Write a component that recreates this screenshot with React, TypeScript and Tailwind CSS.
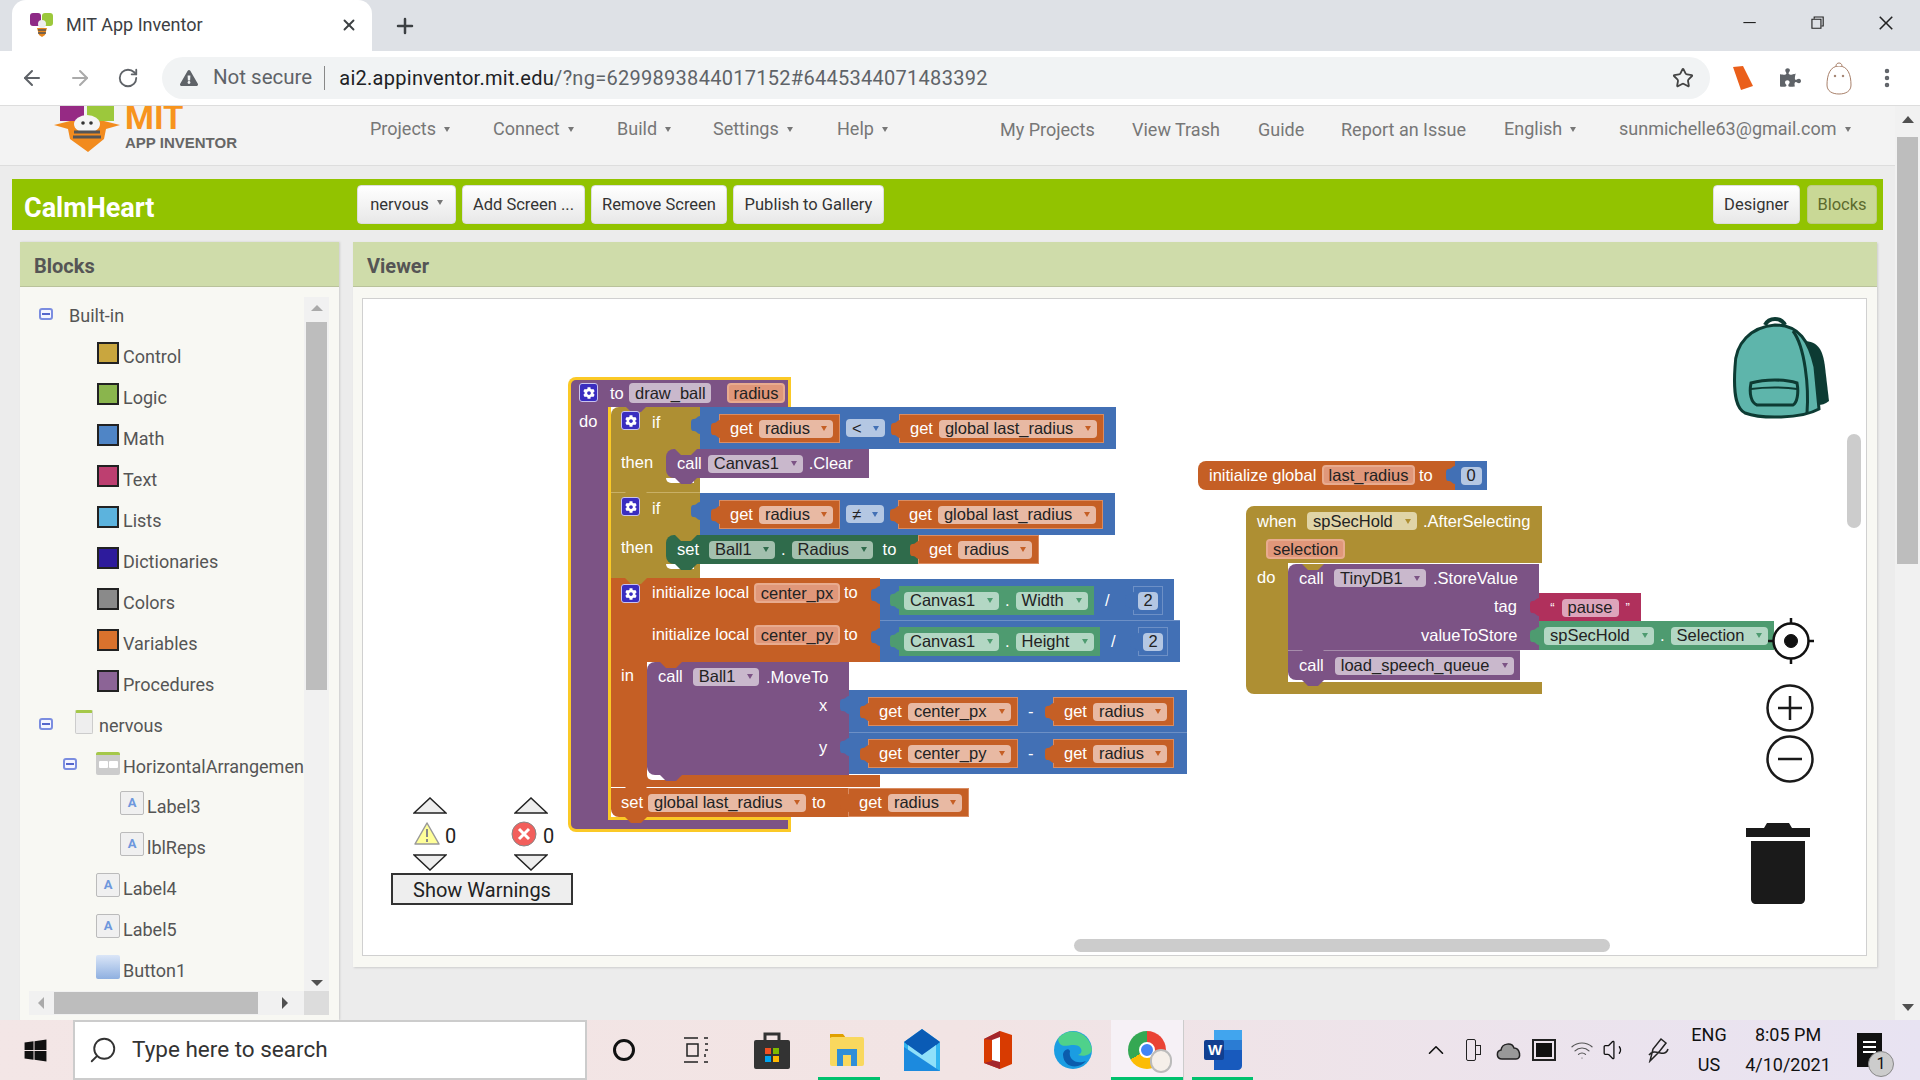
import React from "react";
import clsx from "clsx";
import { ArrowLeft, ArrowRight, ChevronUp, EllipsisVertical, Plus, RotateCw, Search, Star, Volume1, Wifi, X } from "lucide-react";
import { FaCog, FaExclamationTriangle, FaPuzzlePiece, FaWindows } from "react-icons/fa";
import { VscChromeClose, VscChromeMinimize, VscChromeRestore } from "react-icons/vsc";

const tones = {
  orange: { chip: "bg-[#e8b9a3]", caret: "border-t-[#c55f25]" },
  purple: { chip: "bg-[#c9b8cc]", caret: "border-t-[#7c5385]" },
  dark: { chip: "bg-[#a3c0ae]", caret: "border-t-[#2f6b4b]" },
  green: { chip: "bg-[#b3d7c4]", caret: "border-t-[#4e9b70]" },
  mustard: { chip: "bg-[#e0d4a7]", caret: "border-t-[#ae8f33]" },
  blue: { chip: "bg-[#b4c7e3]", caret: "border-t-[#4270b5]" },
};

type Tone = keyof typeof tones;

function Chip({ tone, className, children, noCaret }: { tone: Tone; className?: string; children: React.ReactNode; noCaret?: boolean }) {
  return (
    <span className={clsx("flex h-[18px] items-center justify-between gap-1 rounded-[4px] px-[6px] whitespace-nowrap text-[#222]", tones[tone].chip, className)}>
      {children}
      {!noCaret && <span className={clsx("h-0 w-0 border-x-[3px] border-t-[5px] border-x-transparent", tones[tone].caret)} />}
    </span>
  );
}

function Arg({ className, children }: { className: string; children: React.ReactNode }) {
  return (
    <span className={clsx("absolute flex h-[20px] items-center justify-center rounded-[4px] border-2 border-[#e8ab8f] bg-[#e0977a] text-[#222]", className)}>
      {children}
    </span>
  );
}

function T({ className, children }: { className: string; children: React.ReactNode }) {
  return <span className={clsx("absolute h-5 leading-5 whitespace-nowrap text-white", className)}>{children}</span>;
}

function R({ className, children }: { className: string; children?: React.ReactNode }) {
  return <div className={clsx("absolute", className)}>{children}</div>;
}

function Tab({ className }: { className: string }) {
  return (
    <svg className={clsx("absolute", className)} width="9" height="18" viewBox="0 0 9 18">
      <path d="M9 0C6 0 6 3 3 3C0 3 0 5 0 9C0 13 0 15 3 15C6 15 6 18 9 18Z" fill="currentColor" />
    </svg>
  );
}

function Notch({ className }: { className: string }) {
  return (
    <svg className={clsx("absolute", className)} width="22" height="6" viewBox="0 0 22 6">
      <path d="M0 0L6 6H16L22 0Z" fill="currentColor" />
    </svg>
  );
}

function Gear({ className }: { className: string }) {
  return (
    <span className={clsx("absolute flex h-[19px] w-[19px] items-center justify-center rounded-[3px] border border-[#c9c3ee] bg-[#3a2dc0] text-white", className)}>
      <FaCog size={12} />
    </span>
  );
}

function Get({ className, name }: { className: string; name: string }) {
  return (
    <div className={clsx("absolute flex h-[29px] items-center gap-[6px] border border-[#d98c62] bg-[#c55f25] pl-[10px] pr-[6px] text-white", className)}>
      <Tab className="-left-[9px] top-[5px] text-[#c55f25]" />
      get
      <Chip tone="orange" className="flex-1">{name}</Chip>
    </div>
  );
}

function Prop({ className, a, b, aw, tone }: { className: string; a: string; b: string; aw: string; tone: "dark" | "green" }) {
  const bg = tone === "dark" ? "bg-[#2f6b4b]" : "bg-[#4e9b70]";
  return (
    <div className={clsx("absolute flex h-[29px] items-center gap-[6px] pl-[5px] pr-[6px]", bg, className)}>
      <Tab className={clsx("-left-[9px] top-[5px]", tone === "dark" ? "text-[#2f6b4b]" : "text-[#4e9b70]")} />
      <Chip tone={tone} className={aw}>{a}</Chip>
      <span className="text-white">.</span>
      <Chip tone={tone} className="flex-1">{b}</Chip>
    </div>
  );
}

function Workspace() {
  return (
    <div className="absolute left-[-363px] top-[-299px] h-[1080px] w-[1920px] font-['Liberation_Sans',sans-serif] text-[16.5px]">
      {/* to draw_ball */}
      <R className="left-[568px] top-[377px] h-[30px] w-[223px] rounded-tl-[8px] border-[3px] border-b-0 border-[#fbc926] bg-[#7c5385]" />
      <R className="left-[568px] top-[407px] h-[413px] w-[43px] border-x-[3px] border-[#fbc926] bg-[#7c5385]" />
      <R className="left-[568px] top-[817px] h-[15px] w-[223px] rounded-bl-[8px] border-[3px] border-t-0 border-[#fbc926] bg-[#7c5385]" />
      <R className="left-[608px] top-[817px] h-[3px] w-[183px] bg-[#fbc926]" />
      <Gear className="left-[579px] top-[383px]" />
      <T className="left-[610px] top-[383px]">to</T>
      <R className="left-[629px] top-[383px]"><Chip tone="purple" noCaret className="h-[20px] w-[82px]">draw_ball</Chip></R>
      <Arg className="left-[727px] top-[383px] w-[58px]">radius</Arg>
      <T className="left-[579px] top-[411px]">do</T>

      {/* first if */}
      <R className="left-[611px] top-[407px] h-[85px] w-[89px] rounded-tl-[8px] bg-[#ae8f33]" />
      <Notch className="left-[625px] top-[406px] text-[#7c5385]" />
      <Gear className="left-[621px] top-[411px]" />
      <T className="left-[652px] top-[412px]">if</T>
      <Tab className="left-[691px] top-[416px] text-[#4270b5]" />
      <R className="left-[700px] top-[407px] h-[42px] w-[416px] bg-[#4270b5]" />
      <Get className="left-[719px] top-[414px] w-[121px]" name="radius" />
      <R className="left-[846px] top-[419px]"><Chip tone="blue" className="h-[18px] w-[39px]">&lt;</Chip></R>
      <Get className="left-[899px] top-[414px] w-[205px]" name="global last_radius" />
      <T className="left-[621px] top-[452px]">then</T>
      <R className="left-[666px] top-[478px] h-[5px] w-[28px] rounded-bl-[8px] bg-white" />
      <R className="left-[666px] top-[449px] flex h-[29px] w-[203px] items-center gap-[6px] rounded-l-[8px] bg-[#7c5385] pl-[11px] text-white">
        call
        <Chip tone="purple" className="w-[95px]">Canvas1</Chip>
        .Clear
      </R>
      <Notch className="left-[675px] top-[478px] text-[#7c5385]" />
      <Notch className="left-[675px] top-[449px] text-[#ae8f33]" />

      {/* second if */}
      <R className="left-[611px] top-[492px] h-[86px] w-[89px] border-t border-[#c9b066] bg-[#ae8f33]" />
      <Notch className="left-[625px] top-[492px] text-[#ae8f33]" />
      <Gear className="left-[621px] top-[497px]" />
      <T className="left-[652px] top-[498px]">if</T>
      <Tab className="left-[691px] top-[502px] text-[#4270b5]" />
      <R className="left-[700px] top-[493px] h-[42px] w-[415px] bg-[#4270b5]" />
      <Get className="left-[719px] top-[500px] w-[121px]" name="radius" />
      <R className="left-[846px] top-[505px]"><Chip tone="blue" className="h-[18px] w-[38px]">≠</Chip></R>
      <Get className="left-[898px] top-[500px] w-[205px]" name="global last_radius" />
      <T className="left-[621px] top-[537px]">then</T>
      <R className="left-[666px] top-[564px] h-[5px] w-[28px] rounded-bl-[8px] bg-white" />
      <R className="left-[666px] top-[535px] flex h-[29px] w-[253px] items-center rounded-l-[8px] bg-[#2f6b4b] pl-[11px] text-white">
        set
        <Chip tone="dark" className="ml-[10px] w-[66px]">Ball1</Chip>
        <span className="mx-[6px]">.</span>
        <Chip tone="dark" className="w-[81px]">Radius</Chip>
        <span className="ml-[10px]">to</span>
      </R>
      <Notch className="left-[675px] top-[564px] text-[#2f6b4b]" />
      <Notch className="left-[675px] top-[535px] text-[#ae8f33]" />
      <Get className="left-[918px] top-[535px] w-[121px]" name="radius" />

      {/* initialize local */}
      <R className="left-[611px] top-[578px] h-[84px] w-[269px] bg-[#c55f25]" />
      <R className="left-[611px] top-[662px] h-[113px] w-[36px] bg-[#c55f25]" />
      <R className="left-[611px] top-[775px] h-[12px] w-[269px] bg-[#c55f25]" />
      <Notch className="left-[625px] top-[578px] text-[#ae8f33]" />
      <Gear className="left-[621px] top-[584px]" />
      <T className="left-[652px] top-[582px]">initialize local</T>
      <Arg className="left-[754px] top-[583px] w-[86px]">center_px</Arg>
      <T className="left-[844px] top-[582px]">to</T>
      <T className="left-[652px] top-[624px]">initialize local</T>
      <Arg className="left-[754px] top-[625px] w-[86px]">center_py</Arg>
      <T className="left-[844px] top-[624px]">to</T>

      <Tab className="left-[871px] top-[586px] text-[#4270b5]" />
      <R className="left-[880px] top-[579px] h-[41px] w-[294px] bg-[#4270b5]" />
      <Prop className="left-[899px] top-[586px] w-[195px]" a="Canvas1" b="Width" aw="w-[95px]" tone="green" />
      <T className="left-[1105px] top-[590px]">/</T>
      <R className="left-[1133px] top-[586px] flex h-[29px] w-[30px] items-center justify-center border border-[#6d90c6]">
        <Tab className="-left-[9px] top-[5px] text-[#4270b5]" />
        <Chip tone="blue" noCaret className="w-[20px] justify-center !px-0">2</Chip>
      </R>
      <Tab className="left-[871px] top-[628px] text-[#4270b5]" />
      <R className="left-[880px] top-[620px] h-[42px] w-[300px] border-t border-[#6d90c6] bg-[#4270b5]" />
      <Prop className="left-[899px] top-[627px] w-[201px]" a="Canvas1" b="Height" aw="w-[95px]" tone="green" />
      <T className="left-[1111px] top-[631px]">/</T>
      <R className="left-[1138px] top-[627px] flex h-[29px] w-[30px] items-center justify-center border border-[#6d90c6]">
        <Tab className="-left-[9px] top-[5px] text-[#4270b5]" />
        <Chip tone="blue" noCaret className="w-[20px] justify-center !px-0">2</Chip>
      </R>

      {/* in: MoveTo */}
      <T className="left-[621px] top-[665px]">in</T>
      <R className="left-[647px] top-[775px] h-[5px] w-[30px] rounded-bl-[8px] bg-white" />
      <R className="left-[647px] top-[662px] h-[113px] w-[202px] rounded-l-[8px] bg-[#7c5385]" />
      <Notch className="left-[660px] top-[662px] text-[#c55f25]" />
      <Notch className="left-[660px] top-[775px] text-[#7c5385]" />
      <R className="left-[658px] top-[667px] flex h-[19px] items-center gap-[10px] text-white">
        call
        <Chip tone="purple" className="w-[66px]">Ball1</Chip>
      </R>
      <T className="left-[766px] top-[667px]">.MoveTo</T>
      <T className="left-[819px] top-[695px]">x</T>
      <T className="left-[819px] top-[737px]">y</T>
      <Tab className="left-[840px] top-[696px] text-[#4270b5]" />
      <R className="left-[849px] top-[690px] h-[42px] w-[338px] bg-[#4270b5]" />
      <Get className="left-[868px] top-[697px] w-[150px]" name="center_px" />
      <T className="left-[1028px] top-[701px]">-</T>
      <Get className="left-[1053px] top-[697px] w-[121px]" name="radius" />
      <Tab className="left-[840px] top-[738px] text-[#4270b5]" />
      <R className="left-[849px] top-[732px] h-[42px] w-[338px] border-t border-[#6d90c6] bg-[#4270b5]" />
      <Get className="left-[868px] top-[739px] w-[150px]" name="center_py" />
      <T className="left-[1028px] top-[743px]">-</T>
      <Get className="left-[1053px] top-[739px] w-[121px]" name="radius" />

      {/* set global */}
      <R className="left-[611px] top-[788px] flex h-[29px] w-[237px] items-center rounded-bl-[8px] bg-[#c55f25] pl-[10px] text-white">
        set
        <Chip tone="orange" className="ml-[5px] w-[158px]">global last_radius</Chip>
        <span className="ml-[6px]">to</span>
      </R>
      <Notch className="left-[625px] top-[787px] text-[#c55f25]" />
      <Notch className="left-[625px] top-[817px] text-[#c55f25]" />
      <Get className="left-[848px] top-[788px] w-[121px]" name="radius" />

      {/* initialize global */}
      <R className="left-[1198px] top-[461px] h-[29px] w-[257px] rounded-l-[8px] bg-[#c55f25]" />
      <T className="left-[1209px] top-[465px]">initialize global</T>
      <Arg className="left-[1322px] top-[465px] w-[93px]">last_radius</Arg>
      <T className="left-[1419px] top-[465px]">to</T>
      <Tab className="left-[1446px] top-[466px] text-[#4270b5]" />
      <R className="left-[1455px] top-[461px] flex h-[29px] w-[32px] items-center justify-center bg-[#4270b5]">
        <Chip tone="blue" noCaret className="w-[21px] justify-center !px-0">0</Chip>
      </R>

      {/* when spSecHold */}
      <R className="left-[1246px] top-[506px] h-[57px] w-[296px] rounded-tl-[8px] bg-[#ae8f33]" />
      <R className="left-[1246px] top-[563px] h-[119px] w-[42px] bg-[#ae8f33]" />
      <R className="left-[1246px] top-[682px] h-[12px] w-[296px] rounded-bl-[8px] bg-[#ae8f33]" />
      <T className="left-[1257px] top-[511px]">when</T>
      <R className="left-[1307px] top-[512px]"><Chip tone="mustard" className="w-[110px]">spSecHold</Chip></R>
      <T className="left-[1423px] top-[511px]">.AfterSelecting</T>
      <Arg className="left-[1266px] top-[539px] w-[79px]">selection</Arg>
      <T className="left-[1257px] top-[567px]">do</T>
      <R className="left-[1288px] top-[564px] h-[86px] w-[251px] rounded-tl-[8px] bg-[#7c5385]" />
      <Notch className="left-[1302px] top-[564px] text-[#ae8f33]" />
      <T className="left-[1299px] top-[568px]">call</T>
      <R className="left-[1334px] top-[569px]"><Chip tone="purple" className="w-[92px]">TinyDB1</Chip></R>
      <T className="left-[1433px] top-[568px]">.StoreValue</T>
      <T className="left-[1494px] top-[596px]">tag</T>
      <T className="left-[1421px] top-[625px]">valueToStore</T>
      <Tab className="left-[1530px] top-[598px] text-[#b0305c]" />
      <R className="left-[1539px] top-[593px] flex h-[29px] w-[102px] items-center justify-center gap-[7px] bg-[#b0305c] text-white">
        <span className="text-[13px]">“</span>
        <span className="flex h-[18px] w-[57px] items-center justify-center rounded-[4px] bg-[#dda5bb] text-[#222]">pause</span>
        <span className="text-[13px]">”</span>
      </R>
      <Tab className="left-[1530px] top-[627px] text-[#4e9b70]" />
      <R className="left-[1539px] top-[621px] flex h-[29px] w-[235px] items-center gap-[6px] bg-[#4e9b70] pl-[5px] pr-[6px] text-white">
        <Chip tone="green" className="w-[110px]">spSecHold</Chip>
        .
        <Chip tone="green" className="flex-1">Selection</Chip>
      </R>
      <R className="left-[1288px] top-[650px] flex h-[30px] w-[232px] items-center gap-[11px] rounded-bl-[8px] border-t border-[#a68cab] bg-[#7c5385] pl-[11px] text-white">
        call
        <Chip tone="purple" className="w-[179px]">load_speech_queue</Chip>
      </R>
      <Notch className="left-[1302px] top-[650px] text-[#7c5385]" />
      <Notch className="left-[1302px] top-[680px] text-[#7c5385]" />

      {/* backpack */}
      <svg className="absolute left-[1731px] top-[317px]" width="100" height="102" viewBox="0 0 100 102">
        <path d="M72 24C88 24 92 34 94 50L98 84C90 90 84 88 80 86Z" fill="#0d3b33" />
        <path d="M76 32C82 40 84 60 84 80" fill="none" stroke="#fff" strokeWidth="4" />
        <path d="M34 8C38 0 50 0 54 8" fill="none" stroke="#0d3b33" strokeWidth="4" />
        <path d="M4 50C4 26 20 10 44 8C68 8 78 24 84 50L88 92C70 102 30 102 14 96C6 92 2 80 4 50Z" fill="#5eb5ab" stroke="#0d3b33" strokeWidth="3" />
        <path d="M62 14C74 30 78 70 76 96" fill="none" stroke="#0d3b33" strokeWidth="3" />
        <path d="M20 66C34 62 54 62 66 66C68 76 66 86 62 88H26C20 86 18 76 20 66Z" fill="#5eb5ab" stroke="#0d3b33" strokeWidth="3" />
        <path d="M20 72C34 70 54 70 66 72" fill="none" stroke="#0d3b33" strokeWidth="2" />
      </svg>

      {/* workspace controls */}
      <svg className="absolute left-[1768px] top-[618px]" width="46" height="46" viewBox="0 0 46 46" fill="none" stroke="#111">
        <circle cx="23" cy="23" r="17.5" fill="#fff" strokeWidth="2.5" />
        <path d="M23 0V6M23 40V46M0 23H6M40 23H46" strokeWidth="2.5" />
        <circle cx="23" cy="23" r="6.5" fill="#111" />
      </svg>
      <svg className="absolute left-[1765px] top-[683px]" width="50" height="50" viewBox="0 0 50 50" fill="none" stroke="#1a1a1a" strokeWidth="2.5">
        <circle cx="25" cy="25" r="22.5" fill="#fff" />
        <path d="M13 25H37M25 13V37" />
      </svg>
      <svg className="absolute left-[1765px] top-[734px]" width="50" height="50" viewBox="0 0 50 50" fill="none" stroke="#1a1a1a" strokeWidth="2.5">
        <circle cx="25" cy="25" r="22.5" fill="#fff" />
        <path d="M13 25H37" />
      </svg>
      <svg className="absolute left-[1746px] top-[823px]" width="64" height="82" viewBox="0 0 64 82" fill="#1a1a1a">
        <path d="M0 5H18L21 0H43L46 5H64V14H0Z" />
        <path d="M5 18H59V76C59 79 57 81 54 81H10C7 81 5 79 5 76Z" />
      </svg>

      {/* warnings */}
      <svg className="absolute left-[413px] top-[797px]" width="34" height="17" viewBox="0 0 34 17"><path d="M1 16L17 1L33 16Z" fill="#eee" stroke="#222" strokeWidth="1.5" /></svg>
      <svg className="absolute left-[514px] top-[797px]" width="34" height="17" viewBox="0 0 34 17"><path d="M1 16L17 1L33 16Z" fill="#eee" stroke="#222" strokeWidth="1.5" /></svg>
      <svg className="absolute left-[414px] top-[821px]" width="26" height="25" viewBox="0 0 26 25">
        <path d="M13 2L25 23H1Z" fill="#ffff99" stroke="#999" strokeWidth="1.5" strokeLinejoin="round" />
        <path d="M13 8V16M13 18V21" stroke="#888" strokeWidth="2" />
      </svg>
      <span className="absolute left-[445px] top-[821px] font-['Roboto',sans-serif] text-[20px] text-[#222]">0</span>
      <svg className="absolute left-[511px] top-[821px]" width="26" height="26" viewBox="0 0 26 26">
        <circle cx="13" cy="13" r="12" fill="#f25f5c" stroke="#888" />
        <path d="M8 8L18 18M18 8L8 18" stroke="#fff" strokeWidth="3" />
      </svg>
      <span className="absolute left-[543px] top-[821px] font-['Roboto',sans-serif] text-[20px] text-[#222]">0</span>
      <svg className="absolute left-[413px] top-[854px]" width="34" height="17" viewBox="0 0 34 17"><path d="M1 1L17 16L33 1Z" fill="#eee" stroke="#222" strokeWidth="1.5" /></svg>
      <svg className="absolute left-[514px] top-[854px]" width="34" height="17" viewBox="0 0 34 17"><path d="M1 1L17 16L33 1Z" fill="#eee" stroke="#222" strokeWidth="1.5" /></svg>
      <button className="absolute left-[391px] top-[873px] h-[32px] w-[182px] border-2 border-[#333] bg-[#eee] font-['Roboto',sans-serif] text-[20px] text-[#222]">Show Warnings</button>
    </div>
  );
}

const palette = [
  ["Control", "bg-[#c9a63e]"],
  ["Logic", "bg-[#8ab54d]"],
  ["Math", "bg-[#4f85c6]"],
  ["Text", "bg-[#bd3f70]"],
  ["Lists", "bg-[#5cb3dd]"],
  ["Dictionaries", "bg-[#2d1b9c]"],
  ["Colors", "bg-[#8a8a8a]"],
  ["Variables", "bg-[#d9722d]"],
  ["Procedures", "bg-[#8c6496]"],
];

function Minus({ className }: { className?: string }) {
  return (
    <span className={clsx("flex h-[12px] w-[14px] shrink-0 -translate-y-[2px] items-center justify-center rounded-[3px] border-2 border-[#7b8de0] bg-[#f5f5ff]", className)}>
      <span className="h-[2px] w-[8px] bg-[#5566cc]" />
    </span>
  );
}

function LabelIcon() {
  return (
    <span className="flex h-[24px] w-[24px] shrink-0 -translate-y-[4px] items-center justify-center rounded-[2px] border border-[#bbb] bg-[#f0f0f0] text-[13px] font-bold leading-none text-[#6d97dd]">A</span>
  );
}

function Tree() {
  return (
    <div className="h-[696px] w-[284px] shrink-0 overflow-hidden whitespace-nowrap pt-[8px] text-[18px] text-[#555]">
      <div className="flex h-[41px] items-center pl-[19px]">
        <Minus />
        <span className="ml-[16px]">Built-in</span>
      </div>
      {palette.map(([name, color]) => (
        <div key={name} className="flex h-[41px] items-center pl-[77px]">
          <span className={clsx("h-[22px] w-[22px] shrink-0 -translate-y-[4px] border-2 border-[#222]", color)} />
          <span className="ml-[4px]">{name}</span>
        </div>
      ))}
      <div className="flex h-[41px] items-center pl-[19px]">
        <Minus />
        <span className="ml-[22px] h-[24px] w-[18px] shrink-0 -translate-y-[4px] rounded-[2px] border border-[#ccc] border-t-[3px] border-t-[#a5c84a] bg-[#eee]" />
        <span className="ml-[6px]">nervous</span>
      </div>
      <div className="flex h-[40px] items-center pl-[43px]">
        <Minus />
        <span className="ml-[19px] flex h-[23px] w-[24px] shrink-0 -translate-y-[3px] items-center justify-center gap-[1px] rounded-[2px] border-t-[3px] border-t-[#a5c84a] bg-[#ccc]">
          <span className="h-[7px] w-[9px] rounded-[1px] bg-white" />
          <span className="h-[7px] w-[9px] rounded-[1px] bg-white" />
        </span>
        <span className="ml-[3px]">HorizontalArrangemen</span>
      </div>
      <div className="flex h-[41px] items-center pl-[100px]"><LabelIcon /><span className="ml-[3px]">Label3</span></div>
      <div className="flex h-[41px] items-center pl-[100px]"><LabelIcon /><span className="ml-[3px]">lblReps</span></div>
      <div className="flex h-[41px] items-center pl-[76px]"><LabelIcon /><span className="ml-[3px]">Label4</span></div>
      <div className="flex h-[41px] items-center pl-[76px]"><LabelIcon /><span className="ml-[3px]">Label5</span></div>
      <div className="flex h-[41px] items-center pl-[76px]">
        <span className="h-[24px] w-[24px] shrink-0 -translate-y-[4px] rounded-[2px] bg-gradient-to-b from-[#dbe6f7] to-[#8fb0e0]" />
        <span className="ml-[3px]">Button1</span>
      </div>
    </div>
  );
}

function Caret() {
  return <span className="ml-[8px] inline-block h-0 w-0 -translate-y-[3px] border-x-[3px] border-t-[5px] border-x-transparent border-t-[#777]" />;
}

function Btn({ className, children }: { className?: string; children: React.ReactNode }) {
  return (
    <button className={clsx("flex h-[39px] items-center justify-center rounded-[4px] border pt-[1px] text-[16.5px]", className ?? "", className?.includes("bg-[#c9d896]") ? "" : "border-[#ddd] bg-gradient-to-b from-white to-[#e8e8e8] text-[#333]")}>
      {children}
    </button>
  );
}

function Taskbar() {
  return (
    <div className="relative flex h-[60px] shrink-0 items-center bg-gradient-to-r from-[#f3e6e6] via-[#f2e4e4] to-[#e8e3f2] text-[#111]">
      <div className="flex w-[73px] justify-center pr-[2px]"><FaWindows size={25} /></div>
      <div className="flex h-[60px] w-[514px] items-center border-2 border-[#ccc] bg-white pl-[13px] text-[22.5px] text-[#333]">
        <Search size={30} strokeWidth={1.5} className="-scale-x-100" />
        <span className="ml-[14px]">Type here to search</span>
      </div>
      <div className="flex h-[60px] w-[73px] items-center justify-center">
        <span className="h-[22px] w-[22px] rounded-full border-[3px] border-[#111]" />
      </div>
      <div className="flex h-[60px] w-[71px] items-center justify-center">
        <svg width="24" height="26" viewBox="0 0 24 26" fill="none" stroke="#222" strokeWidth="1.5">
          <path d="M0 1H14M0 25H14M20 1H24M20 25H24M3 7H14V19H3ZM21 7H24M21 13H24M21 17V20" />
        </svg>
      </div>
      <div className="flex h-[60px] w-[81px] items-center justify-center">
        <svg width="36" height="38" viewBox="0 0 36 38">
          <path d="M11 10V3H25V10" fill="none" stroke="#333" strokeWidth="3" />
          <rect y="9" width="36" height="29" rx="2" fill="#333" />
          <rect x="11" y="17" width="6" height="6" fill="#f25022" />
          <rect x="19" y="17" width="6" height="6" fill="#7fba00" />
          <rect x="11" y="25" width="6" height="6" fill="#00a4ef" />
          <rect x="19" y="25" width="6" height="6" fill="#ffb900" />
        </svg>
      </div>
      <div className="relative flex h-[60px] w-[70px] items-center justify-center">
        <svg width="34" height="32" viewBox="0 0 34 32">
          <path d="M0 0H13L16 4H0Z" fill="#e0a000" />
          <rect y="3" width="34" height="29" rx="2" fill="#f9d85e" />
          <path d="M7 32V15H27V32H21V21H13V32Z" fill="#2f8fd8" />
        </svg>
        <span className="absolute bottom-0 left-[6px] h-[3px] w-[62px] bg-[#00c16e]" />
      </div>
      <div className="flex h-[60px] w-[80px] items-center justify-center">
        <svg width="36" height="42" viewBox="0 0 36 42">
          <path d="M0 13L18 0L36 13V42H0Z" fill="#32b5f0" />
          <path d="M0 13L18 0L36 13L18 28Z" fill="#0a5bb5" />
          <path d="M4 16L18 26L32 16V42H4Z" fill="#8fe0fa" />
          <path d="M0 18L36 42H0Z" fill="#1c8ade" />
        </svg>
      </div>
      <div className="flex h-[60px] w-[72px] items-center justify-center">
        <svg width="28" height="38" viewBox="0 0 28 38">
          <path d="M16 0L28 4V33L16 38L0 32V8Z" fill="#d83b01" />
          <path d="M16 0V38L0 32L8 30V9L0 8Z" fill="#a4262c" />
          <path d="M8 9L16 6V31L8 29Z" fill="#fff" />
        </svg>
      </div>
      <div className="flex h-[60px] w-[77px] items-center justify-center">
        <svg width="38" height="38" viewBox="0 0 38 38">
          <circle cx="19" cy="19" r="19" fill="#1b9de2" />
          <path d="M4 8C12 -4 34 -2 38 18C38 24 30 26 24 24C30 22 28 14 20 14C12 14 6 18 4 8Z" fill="#4fd18b" />
          <path d="M16 20C14 28 22 34 32 30C26 38 10 38 9 24C9 20 14 16 16 20Z" fill="#0b5cad" />
        </svg>
      </div>
      <div className="relative flex h-[60px] w-[72px] items-center justify-center bg-[#f6f1f6]">
        <span className="relative h-[38px] w-[38px] rounded-full bg-[conic-gradient(#ea4335_0deg_120deg,#fbbc04_120deg_240deg,#34a853_240deg_360deg)]">
          <span className="absolute left-[11px] top-[11px] h-[16px] w-[16px] rounded-full border-2 border-white bg-[#4285f4]" />
          <span className="absolute -bottom-[4px] -right-[6px] h-[24px] w-[22px] rounded-full border-2 border-[#bbb] bg-[#f5efe9]" />
        </span>
        <span className="absolute bottom-0 left-0 h-[3px] w-[72px] bg-[#00c16e]" />
        <span className="absolute -right-[1px] top-0 h-[60px] w-[1px] bg-[#ccc]" />
      </div>
      <div className="relative ml-[9px] flex h-[60px] w-[61px] items-center justify-center">
        <svg width="38" height="40" viewBox="0 0 38 40">
          <path d="M10 0H34C36 0 38 2 38 4V36C38 38 36 40 34 40H10Z" fill="#185abd" />
          <path d="M10 0H38V10H10Z" fill="#41a5ee" />
          <path d="M10 10H38V20H10Z" fill="#2b7cd3" />
          <rect y="10" width="20" height="20" rx="2" fill="#103f91" />
          <text x="4" y="25" fill="#fff" fontSize="15" fontWeight="700" fontFamily="Liberation Sans">W</text>
        </svg>
        <span className="absolute bottom-0 left-0 h-[3px] w-[61px] bg-[#00c16e]" />
      </div>
      <ChevronUp size={26} strokeWidth={1.5} className="ml-[170px]" />
      <div className="ml-[14px] flex h-[32px] w-[20px] items-center justify-center">
        <span className="h-[22px] w-[10px] rounded-[2px] border border-[#222]" />
        <span className="h-[10px] w-[5px] border border-l-0 border-[#222]" />
      </div>
      <svg className="ml-[13px]" width="26" height="20" viewBox="0 0 26 20">
        <path d="M6 19C0 19 0 11 5 10C6 3 16 2 18 8C24 8 26 19 20 19Z" fill="#999" stroke="#222" strokeWidth="1.5" />
      </svg>
      <span className="ml-[10px] flex h-[22px] w-[24px] items-center justify-center border-2 border-[#222]"><span className="h-[14px] w-[16px] bg-[#111]" /></span>
      <Wifi size={24} strokeWidth={1.2} className="ml-[14px] text-[#555]" />
      <Volume1 size={26} strokeWidth={1.2} className="ml-[8px]" />
      <svg className="ml-[19px]" width="22" height="26" viewBox="0 0 22 26" fill="none" stroke="#222" strokeWidth="1.5">
        <path d="M3 24L6 12L14 2L19 6L12 15ZM2 18C8 10 18 22 21 12" />
      </svg>
      <div className="ml-[20px] flex w-[40px] flex-col items-center gap-[6px] text-[18px] leading-[24px]">
        <span>ENG</span>
        <span>US</span>
      </div>
      <div className="ml-[13px] flex w-[92px] flex-col items-center gap-[6px] text-[18px] leading-[24px]">
        <span>8:05 PM</span>
        <span>4/10/2021</span>
      </div>
      <div className="relative ml-[23px] h-[34px] w-[25px] bg-[#111]">
        <span className="mx-auto mt-[8px] block h-[2px] w-[13px] bg-white" />
        <span className="mx-auto mt-[3px] block h-[2px] w-[13px] bg-white" />
        <span className="mx-auto mt-[3px] block h-[2px] w-[13px] bg-white" />
        <span className="absolute left-[11px] top-[18px] flex h-[26px] w-[26px] items-center justify-center rounded-full border border-[#888] bg-[#ccc] text-[16px]">1</span>
      </div>
    </div>
  );
}

export default function App() {
  return (
    <div className="flex h-screen w-[1920px] flex-col overflow-hidden bg-white font-['Roboto',sans-serif]">
      {/* tabs */}
      <div className="flex h-[51px] shrink-0 items-end bg-[#dee1e6] pl-[12px] text-[#3c4043]">
        <div className="flex h-[51px] w-[360px] items-center rounded-t-[14px] bg-white pb-[2px] pl-[18px] pr-[14px]">
          <svg width="24" height="24" viewBox="0 0 24 24">
            <rect x="0" y="0" width="11" height="13" rx="3" fill="#8e2a86" />
            <rect x="12" y="0" width="11" height="13" rx="3" fill="#9cc83c" />
            <circle cx="12" cy="11" r="4" fill="#eee" />
            <path d="M7 15H17L15 22L12 24L9 22Z" fill="#e8861c" />
            <path d="M8 17H16M8 20H16" stroke="#555" strokeWidth="1.5" />
          </svg>
          <span className="ml-[12px] flex-1 text-[18px]">MIT App Inventor</span>
          <X size={18} strokeWidth={2.5} />
        </div>
        <Plus size={24} strokeWidth={2.5} className="mb-[13px] ml-[21px]" />
        <div className="ml-auto flex h-[51px] items-start pt-[13px] text-[#222]">
          <VscChromeMinimize size={18} className="mr-[50px]" />
          <VscChromeRestore size={18} className="mr-[50px]" />
          <VscChromeClose size={20} className="mr-[24px]" />
        </div>
      </div>

      {/* address bar */}
      <div className="flex h-[55px] shrink-0 items-center border-b border-[#ddd] pb-[1px] text-[#5f6368]">
        <ArrowLeft size={24} className="ml-[20px]" />
        <ArrowRight size={24} className="ml-[24px] text-[#aaa]" />
        <RotateCw size={22} className="ml-[25px]" />
        <div className="ml-[23px] flex h-[42px] w-[1548px] items-center rounded-full bg-[#f1f3f4] pl-[18px] pr-[16px] text-[20.5px]">
          <FaExclamationTriangle size={18} />
          <span className="ml-[15px]">Not secure</span>
          <span className="ml-[12px] h-[24px] w-[1px] bg-[#888]" />
          <span className="ml-[14px] text-[20px] tracking-[0.28px]"><span className="text-[#202124]">ai2.appinventor.mit.edu</span>/?ng=6299893844017152#6445344071483392</span>
          <Star size={22} className="ml-auto text-[#444]" />
        </div>
        <svg className="ml-[23px]" width="20" height="24" viewBox="0 0 20 24"><path d="M0 1L10 0L20 20L8 24Z" fill="#ea5f1a" /></svg>
        <FaPuzzlePiece size={21} className="ml-[27px] text-[#5f6368]" />
        <svg className="ml-[23px]" width="30" height="34" viewBox="0 0 30 34" fill="#fff" stroke="#a8806a" strokeWidth="1">
          <path d="M15 5C6 5 3 14 3 24C3 30 8 33 15 33C22 33 27 30 27 24C27 14 24 5 15 5Z" />
          <path d="M12 5C12 1 18 1 18 5" />
          <circle cx="11" cy="15" r="0.8" fill="#333" />
          <circle cx="19" cy="15" r="0.8" fill="#333" />
        </svg>
        <EllipsisVertical size={24} strokeWidth={2.5} className="ml-[21px]" />
      </div>

      <div className="flex min-h-0 flex-1">
        <div className="flex min-w-0 flex-1 flex-col bg-[#ececec]">
          {/* app header */}
          <div className="flex h-[60px] shrink-0 items-start border-b border-[#ddd] bg-[#f3f3f3] pt-[11px] text-[18px] leading-[24px] text-[#777]">
            <div className="relative -mt-[11px] h-[59px] w-[370px] shrink-0 overflow-hidden">
              <svg className="absolute left-[54px] -top-[1px]" width="66" height="48" viewBox="0 0 66 48">
                <path d="M6 0H30V16H6Z" fill="#962a84" />
                <path d="M33 0H60V16H33Z" fill="#9cc83c" />
                <path d="M0 20L16 16L50 16L66 20L52 24L50 34L34 47L16 34L14 24Z" fill="#f28b1e" />
                <ellipse cx="33" cy="19" rx="13" ry="9" fill="#f5f5f5" />
                <circle cx="29" cy="18" r="1.8" fill="#333" />
                <circle cx="37" cy="18" r="1.8" fill="#333" />
                <path d="M20 27H46M19 32H47" stroke="#555" strokeWidth="3" />
              </svg>
              <span aria-hidden="false" className="absolute left-[125px] -top-[3px] text-[33px] font-bold leading-[30px] text-[#f7941d]">MIT</span>
              <span className="absolute left-[125px] top-[27px] font-['Liberation_Sans',sans-serif] text-[15px] font-bold leading-[20px] text-[#666]">APP INVENTOR</span>
            </div>
            <span className="w-[123px]">Projects<Caret /></span>
            <span className="w-[124px]">Connect<Caret /></span>
            <span className="w-[96px]">Build<Caret /></span>
            <span className="w-[124px]">Settings<Caret /></span>
            <span className="w-[163px]">Help<Caret /></span>
            <span className="w-[132px] pt-[1px]">My Projects</span>
            <span className="w-[126px] pt-[1px]">View Trash</span>
            <span className="w-[83px] pt-[1px]">Guide</span>
            <span className="w-[163px] pt-[1px]">Report an Issue</span>
            <span className="w-[115px]">English<Caret /></span>
            <span className="whitespace-nowrap">sunmichelle63@gmail.com<Caret /></span>
          </div>

          {/* project toolbar */}
          <div className="ml-[12px] mr-[12px] mt-[13px] flex h-[51px] shrink-0 items-start bg-[#92c300] pt-[6px]">
            <span className="ml-[12px] mt-[7px] w-[333px] text-[27px] font-bold leading-[32px] text-white">CalmHeart</span>
            <Btn className="w-[99px]">nervous<Caret /></Btn>
            <Btn className="ml-[6px] w-[123px]">Add Screen ...</Btn>
            <Btn className="ml-[6px] w-[136px]">Remove Screen</Btn>
            <Btn className="ml-[6px] w-[151px]">Publish to Gallery</Btn>
            <Btn className="ml-auto w-[87px]">Designer</Btn>
            <Btn className="ml-[7px] mr-[6px] w-[70px] border-[#bccb86] bg-[#c9d896] text-[#5c6b2e]">Blocks</Btn>
          </div>

          {/* panels */}
          <div className="mt-[12px] flex min-h-0 flex-1 items-start gap-[14px] pl-[20px] pr-[18px]">
            <div className="flex h-[778px] w-[319px] shrink-0 flex-col bg-[#f8f8f3] shadow-[1px_0_2px_#ccc]">
              <div className="flex h-[45px] shrink-0 items-center border-b border-[#b9c29b] bg-[#cfdcaa] pl-[14px] pt-[3px] text-[20px] font-bold text-[#555]">Blocks</div>
              <div className="flex h-[704px] w-[309px]">
                <Tree />
                <div className="mt-[10px] flex h-[694px] w-[25px] flex-col items-center bg-[#f1f1f1]">
                  <span className="mt-[8px] h-0 w-0 border-x-[6px] border-b-[6px] border-x-transparent border-b-[#aaa]" />
                  <span className="mt-[11px] h-[368px] w-[21px] bg-[#bdbdbd]" />
                  <span className="mt-auto mb-[5px] h-0 w-0 border-x-[6px] border-t-[6px] border-x-transparent border-t-[#505050]" />
                </div>
              </div>
              <div className="ml-[9px] flex h-[24px] w-[300px] items-center bg-[#f1f1f1]">
                <span className="ml-[9px] h-0 w-0 border-y-[6px] border-r-[6px] border-y-transparent border-r-[#aaa]" />
                <span className="ml-[10px] h-[22px] w-[204px] bg-[#bdbdbd]" />
                <span className="ml-[24px] h-0 w-0 border-y-[6px] border-l-[6px] border-y-transparent border-l-[#505050]" />
                <span className="ml-auto h-[24px] w-[25px] bg-[#dcdcdc]" />
              </div>
            </div>

            <div className="flex h-[725px] flex-1 flex-col bg-[#f8f8f3] shadow-[1px_1px_2px_#ccc]">
              <div className="flex h-[45px] shrink-0 items-center border-b border-[#b9c29b] bg-[#cfdcaa] pl-[14px] pt-[3px] text-[20px] font-bold text-[#555]">Viewer</div>
              <div className="mb-[11px] ml-[9px] mr-[10px] mt-[11px] flex-1">
                <div className="relative h-full overflow-hidden border border-[#d0d0d0] bg-white">
                  <Workspace />
                  <span className="absolute left-[711px] bottom-[3px] h-[13px] w-[536px] rounded-full bg-[#ccc]" />
                  <span className="absolute right-[5px] top-[135px] h-[94px] w-[14px] rounded-full bg-[#ccc]" />
                </div>
              </div>
            </div>
          </div>
        </div>

        {/* page scrollbar */}
        <div className="flex w-[25px] shrink-0 flex-col items-center bg-[#f1f1f1]">
          <span className="mt-[10px] h-0 w-0 border-x-[6px] border-b-[7px] border-x-transparent border-b-[#505050]" />
          <span className="mt-[14px] h-[427px] w-[21px] bg-[#bdbdbd]" />
          <span className="mb-[9px] mt-auto h-0 w-0 border-x-[6px] border-t-[7px] border-x-transparent border-t-[#505050]" />
        </div>
      </div>

      <Taskbar />
    </div>
  );
}
